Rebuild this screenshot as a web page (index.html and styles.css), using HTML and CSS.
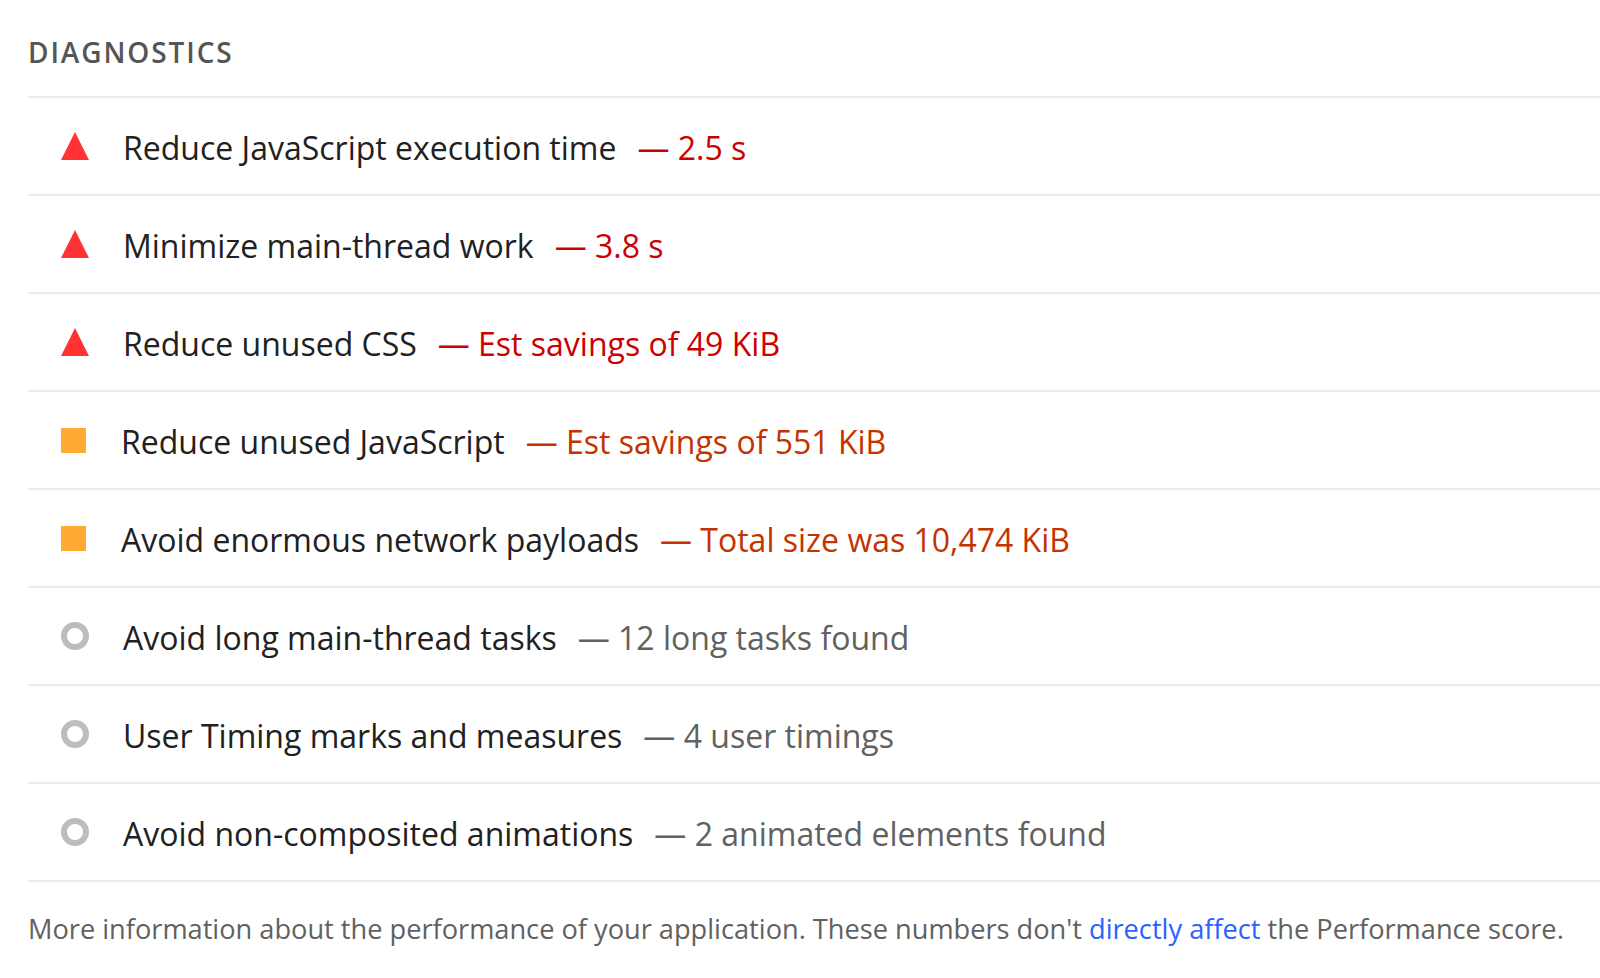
FILE: index.html
```html
<!DOCTYPE html>
<html lang="en">
<head>
    <meta charset="UTF-8">
    <meta name="viewport" content="width=device-width, initial-scale=1.0">
    <title>Diagnostics</title>
    <link rel="stylesheet" href="styles.css">
</head>
<body>
    <div class="audit-group">
        <div class="group-header">Diagnostics</div>

        <div class="audit fail">
            <span class="score-icon"></span>
            <span class="audit-title">Reduce JavaScript execution time</span>
            <span class="display-text">— 2.5 s</span>
        </div>
        <div class="audit fail">
            <span class="score-icon"></span>
            <span class="audit-title">Minimize main-thread work</span>
            <span class="display-text">— 3.8 s</span>
        </div>
        <div class="audit fail">
            <span class="score-icon"></span>
            <span class="audit-title">Reduce unused CSS</span>
            <span class="display-text">— Est savings of 49 KiB</span>
        </div>
        <div class="audit average">
            <span class="score-icon"></span>
            <span class="audit-title">Reduce unused JavaScript</span>
            <span class="display-text">— Est savings of 551 KiB</span>
        </div>
        <div class="audit average">
            <span class="score-icon"></span>
            <span class="audit-title">Avoid enormous network payloads</span>
            <span class="display-text">— Total size was 10,474 KiB</span>
        </div>
        <div class="audit informative">
            <span class="score-icon"></span>
            <span class="audit-title">Avoid long main-thread tasks</span>
            <span class="display-text">— 12 long tasks found</span>
        </div>
        <div class="audit informative">
            <span class="score-icon"></span>
            <span class="audit-title">User Timing marks and measures</span>
            <span class="display-text">— 4 user timings</span>
        </div>
        <div class="audit informative">
            <span class="score-icon"></span>
            <span class="audit-title">Avoid non-composited animations</span>
            <span class="display-text">— 2 animated elements found</span>
        </div>

        <p class="group-description">More information about the performance of your application. These numbers don't <a href="#">directly affect</a> the Performance score.</p>
    </div>
</body>
</html>
```

FILE: styles.css
```css
body {
    margin: 0;
    background: #fff;
    font-family: "Open Sans", "Noto Sans", Arial, sans-serif;
    color: #212121;
}

.audit-group {
    padding-left: 28px;
}

.group-header {
    height: 98px;
    box-sizing: border-box;
    padding-top: 33px;
    font-size: 28px;
    font-weight: 600;
    letter-spacing: 1.9px;
    text-transform: uppercase;
    color: #555;
    border-bottom: 2px solid #ebebeb;
}

.audit {
    display: flex;
    align-items: center;
    height: 96px;
    padding-left: 33px;
    border-bottom: 2px solid #ebebeb;
    font-size: 32px;
}

.audit-title {
    margin-top: 3px;
}

.display-text {
    margin-top: 3px;
    margin-left: 21px;
}

.score-icon {
    flex: none;
    margin-right: 34px;
}

.fail .score-icon {
    width: 0;
    height: 0;
    border-left: 14px solid transparent;
    border-right: 14px solid transparent;
    border-bottom: 28px solid #f33;
}

.average .score-icon {
    width: 25px;
    height: 25px;
    background: #fa3;
    margin-right: 35px;
}

.informative .score-icon {
    width: 16px;
    height: 16px;
    border: 6px solid #bdbdbd;
    border-radius: 50%;
}

.fail .display-text {
    color: #c00;
}

.average .display-text {
    color: #c33300;
}

.informative .display-text {
    color: #616161;
}

.group-description {
    margin: 0;
    padding-top: 28px;
    font-size: 27.2px;
    color: #616161;
}

.group-description a {
    color: #2962ff;
    text-decoration: none;
}
```
